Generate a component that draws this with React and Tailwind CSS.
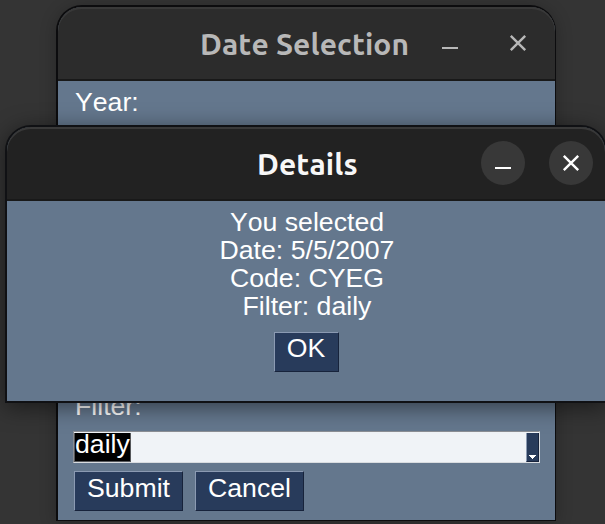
const textFont = 'font-["Liberation_Sans",Arial,sans-serif] [font-kerning:none]';

function TitleBar({ title, active }) {
  return (
    <div
      className={
        'relative flex h-[74px] shrink-0 items-center justify-end gap-6 rounded-t-[24px] border-b-2 border-[#191919] shadow-[inset_0_2px_0_#393939] ' +
        (active ? 'bg-[#222222] pr-3 text-white' : 'bg-[#2c2c2c] pr-[15px] text-[#b8b8b8]')
      }
    >
      <h1
        className={
          'absolute top-[17px] whitespace-nowrap font-["Ubuntu","Noto_Sans",sans-serif] text-[30px] leading-[40px] font-bold tracking-[0.1px] ' +
          (active ? 'left-[250px] text-[#f7f7f7]' : 'left-[142px]')
        }
      >
        {title}
      </h1>
      <button className={'size-11 rounded-full ' + (active ? 'bg-[#383838]' : '')} aria-label="Minimize">
        <svg className="size-11" viewBox="0 0 44 44">
          <path d="M14 27h16" stroke="currentColor" strokeWidth="2" />
        </svg>
      </button>
      <button className={'size-11 rounded-full ' + (active ? 'bg-[#383838]' : '')} aria-label="Close">
        <svg className="size-11" viewBox="0 0 44 44">
          <path d="M14.8 14.8l14.4 14.4M29.2 14.8L14.8 29.2" stroke="currentColor" strokeWidth="2.4" />
        </svg>
      </button>
    </div>
  );
}

function Button({ children, className }) {
  return (
    <button
      className={
        'flex h-10 justify-center border border-t-[#8b9ab2] border-r-[#17233b] border-b-[#17233b] border-l-[#8b9ab2] bg-[#283b5b] text-[26.67px] text-white ' +
        className
      }
    >
      {children}
    </button>
  );
}

export default function App() {
  return (
    <main className={'relative h-[524px] w-[605px] overflow-hidden bg-[#343434] text-[26.67px] text-white ' + textFont}>
      <section className="absolute top-[5px] left-[56px] flex h-[516px] w-[500px] flex-col rounded-t-[26px] border-2 border-r-1 border-b-1 border-[#0c0c0e] bg-[#64778d] shadow-[0_2px_16px_rgba(0,0,0,0.25)]">
        <TitleBar title="Date Selection" />
        <div className="flex flex-1 flex-col pr-[15px] pl-[15px]">
          <label className="mt-[5px] ml-[2px] leading-[32px]">Year:</label>
          <label className="mt-[272px] ml-[2px] leading-[32px]">Filter:</label>
          <div className="mt-[9px] flex h-8 w-[467px] border border-t-[#8b8e94] border-r-[#d9dce0] border-b-[#d9dce0] border-l-[#8b8e94] bg-[#f0f3f7]">
            <span className="mt-px h-[29px] w-[57px] border-r border-b border-l border-[#55575a] bg-black leading-[22px]">daily</span>
            <span className="mt-px ml-auto flex h-[29px] w-[13px] items-end justify-center border border-t-0 border-r-[#17233b] border-b-[#17233b] border-l-[#8b9ab2] bg-[#283b5b] pb-[2px]">
              <svg className="h-1 w-[7px]" viewBox="0 0 7 4" shapeRendering="crispEdges">
                <path d="M0 0h7v1H6v1H5v1H4v1H3V3H2V2H1V1H0z" fill="white" />
              </svg>
            </span>
          </div>
          <div className="mt-2 ml-px flex gap-3">
            <Button className="w-[109px] leading-[32px]">Submit</Button>
            <Button className="w-[109px] leading-[32px]">Cancel</Button>
          </div>
        </div>
      </section>

      <section className="absolute top-[125px] left-[5px] flex h-[278px] w-[602px] flex-col rounded-t-[26px] border-2 border-[#101114] bg-[#64778d] shadow-[0_4px_22px_rgba(0,0,0,0.5)]">
        <TitleBar title="Details" active />
        <div className="flex flex-col items-center pt-[7px]">
          <p className="pl-[2px] text-center leading-[28px]">
            You selected
            <br />
            Date: 5/5/2007
            <br />
            Code: CYEG
            <br />
            Filter: daily
          </p>
          <Button className="mt-3 w-[65px] leading-[31px]">OK</Button>
        </div>
      </section>
    </main>
  );
}
